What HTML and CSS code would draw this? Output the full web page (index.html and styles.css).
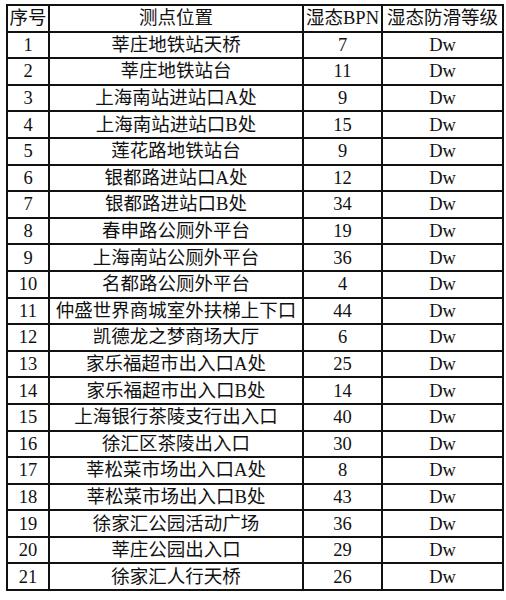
FILE: index.html
```html
<!DOCTYPE html>
<html lang="zh">
<head>
<meta charset="utf-8">
<link rel="stylesheet" href="styles.css">
</head>
<body>
<table class="grid">
<colgroup><col class="c1"><col class="c2"><col class="c3"><col class="c4"></colgroup>
<thead>
<tr><th>序号</th><th>测点位置</th><th>湿态BPN</th><th>湿态防滑等级</th></tr>
</thead>
<tbody>
<tr><td>1</td><td>莘庄地铁站天桥</td><td>7</td><td>Dw</td></tr>
<tr><td>2</td><td>莘庄地铁站台</td><td>11</td><td>Dw</td></tr>
<tr><td>3</td><td>上海南站进站口A处</td><td>9</td><td>Dw</td></tr>
<tr><td>4</td><td>上海南站进站口B处</td><td>15</td><td>Dw</td></tr>
<tr><td>5</td><td>莲花路地铁站台</td><td>9</td><td>Dw</td></tr>
<tr><td>6</td><td>银都路进站口A处</td><td>12</td><td>Dw</td></tr>
<tr><td>7</td><td>银都路进站口B处</td><td>34</td><td>Dw</td></tr>
<tr><td>8</td><td>春申路公厕外平台</td><td>19</td><td>Dw</td></tr>
<tr><td>9</td><td>上海南站公厕外平台</td><td>36</td><td>Dw</td></tr>
<tr><td>10</td><td>名都路公厕外平台</td><td>4</td><td>Dw</td></tr>
<tr><td>11</td><td>仲盛世界商城室外扶梯上下口</td><td>44</td><td>Dw</td></tr>
<tr><td>12</td><td>凯德龙之梦商场大厅</td><td>6</td><td>Dw</td></tr>
<tr><td>13</td><td>家乐福超市出入口A处</td><td>25</td><td>Dw</td></tr>
<tr><td>14</td><td>家乐福超市出入口B处</td><td>14</td><td>Dw</td></tr>
<tr><td>15</td><td>上海银行茶陵支行出入口</td><td>40</td><td>Dw</td></tr>
<tr><td>16</td><td>徐汇区茶陵出入口</td><td>30</td><td>Dw</td></tr>
<tr><td>17</td><td>莘松菜市场出入口A处</td><td>8</td><td>Dw</td></tr>
<tr><td>18</td><td>莘松菜市场出入口B处</td><td>43</td><td>Dw</td></tr>
<tr><td>19</td><td>徐家汇公园活动广场</td><td>36</td><td>Dw</td></tr>
<tr><td>20</td><td>莘庄公园出入口</td><td>29</td><td>Dw</td></tr>
<tr><td>21</td><td>徐家汇人行天桥</td><td>26</td><td>Dw</td></tr>
</tbody>
</table>
</body>
</html>
```
FILE: styles.css
```css
html, body {
  margin: 0;
  padding: 0;
  background: #fff;
}
body {
  padding: 4px 0 0 6px;
}
.grid {
  border-collapse: collapse;
  table-layout: fixed;
  width: 496px;
  font-family: "Liberation Serif", "Noto Sans CJK SC", sans-serif;
  font-size: 18.5px;
  color: #111;
}
.c1 { width: 42px; }
.c2 { width: 254px; }
.c3 { width: 79px; }
.c4 { width: 121px; }
.grid th, .grid td {
  border: 2px solid #111;
  padding: 0;
  height: 24.6px;
  line-height: 22px;
  text-align: center;
  font-weight: normal;
  white-space: nowrap;
  overflow: hidden;
}
```
